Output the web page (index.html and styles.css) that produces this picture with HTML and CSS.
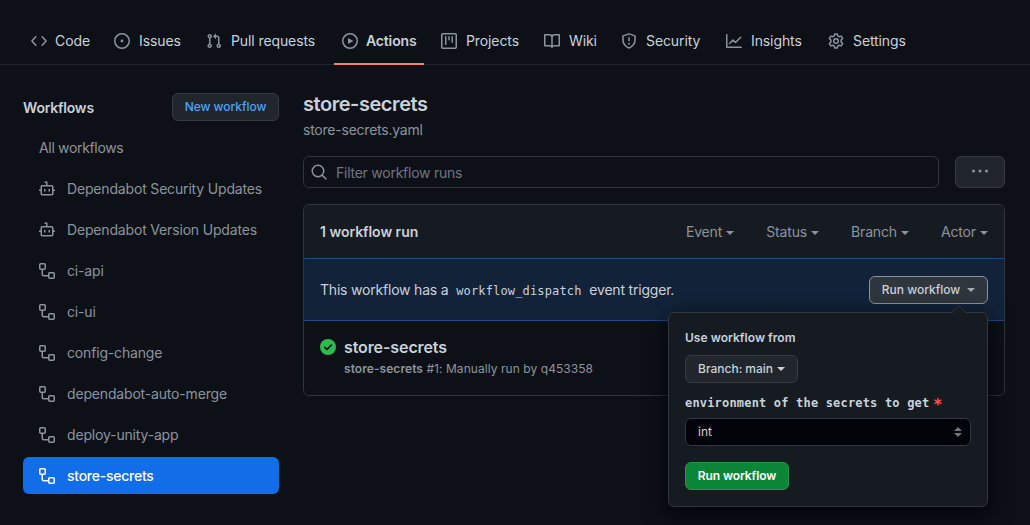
FILE: index.html
```html
<!DOCTYPE html>
<html lang="en">
<head>
<meta charset="utf-8">
<title>store-secrets · Actions</title>
<link rel="stylesheet" href="styles.css">
</head>
<body>
<svg class="defs" width="0" height="0">
  <symbol id="workflow" viewBox="0 0 16 16"><path d="M0 1.75C0 .784.784 0 1.75 0h3.5C6.216 0 7 .784 7 1.75v3.5A1.75 1.75 0 015.25 7H4v4a1 1 0 001 1h4v-1.25C9 9.784 9.784 9 10.75 9h3.5c.966 0 1.75.784 1.75 1.75v3.5A1.75 1.75 0 0114.25 16h-3.5A1.75 1.75 0 019 14.25v-.75H5A2.5 2.5 0 012.5 11V7h-.75A1.75 1.75 0 010 5.25v-3.5zm1.75-.25a.25.25 0 00-.25.25v3.5c0 .138.112.25.25.25h3.5a.25.25 0 00.25-.25v-3.5a.25.25 0 00-.25-.25h-3.5zm9 9a.25.25 0 00-.25.25v3.5c0 .138.112.25.25.25h3.5a.25.25 0 00.25-.25v-3.5a.25.25 0 00-.25-.25h-3.5z"/></symbol>
  <symbol id="bot" viewBox="0 0 16 16"><path class="line" d="M5.5 1.25h2.25V4.5M3.25 4.75h9.5c.55 0 1 .45 1 1v7c0 .55-.45 1-1 1h-9.5c-.55 0-1-.45-1-1v-7c0-.55.45-1 1-1zM0 9.25h2M14 9.25h2M5.75 8v2.5M10.25 8v2.5"/></symbol>
</svg>

<nav class="tabs">
  <a class="tab"><svg class="icon" viewBox="0 0 16 16"><path class="line" stroke-linecap="round" stroke-linejoin="round" d="M4.8 3.7.9 8l3.9 4.3M11.2 3.7 15.1 8l-3.9 4.3"/></svg><span>Code</span></a>
  <a class="tab"><svg class="icon" viewBox="0 0 16 16"><circle class="line" cx="8" cy="8" r="7.25"/><circle cx="8" cy="8" r="1.4"/></svg><span>Issues</span></a>
  <a class="tab"><svg class="icon" viewBox="0 0 16 16"><path fill-rule="evenodd" d="M7.177 3.073L9.573.677A.25.25 0 0110 .854v4.792a.25.25 0 01-.427.177L7.177 3.427a.25.25 0 010-.354zM3.75 2.5a.75.75 0 100 1.5.75.75 0 000-1.5zm-2.25.75a2.25 2.25 0 113 2.122v5.256a2.251 2.251 0 11-1.5 0V5.372A2.25 2.25 0 011.5 3.25zM11 2.5h-1V4h1a1 1 0 011 1v5.628a2.251 2.251 0 101.5 0V5A2.5 2.5 0 0011 2.5zm1 10.25a.75.75 0 111.5 0 .75.75 0 01-1.5 0zM3.75 12a.75.75 0 100 1.5.75.75 0 000-1.5z"/></svg><span>Pull requests</span></a>
  <a class="tab tab-active"><svg class="icon" viewBox="0 0 16 16"><circle class="line" cx="8" cy="8" r="7.25"/><path d="M6.4 5.2 11 7.8a.25.25 0 010 .4L6.4 10.8a.25.25 0 01-.4-.2V5.4c0-.2.2-.3.4-.2z"/></svg><span>Actions</span></a>
  <a class="tab"><svg class="icon" viewBox="0 0 16 16"><rect class="line" x=".75" y=".75" width="14.5" height="14.5" rx="1"/><path class="line" stroke-linecap="round" d="M4.75 3.8v7.5M8 3.8v3M11.25 3.8v5.5"/></svg><span>Projects</span></a>
  <a class="tab"><svg class="icon" viewBox="0 0 16 16"><path class="line" stroke-linejoin="round" d="M.75 1.75h4.5C6.8 1.75 8 2.9 8 4.3c0-1.4 1.2-2.55 2.75-2.55h4.5v11h-4.8c-1.2 0-2 .6-2.45 1.5-.45-.9-1.25-1.5-2.45-1.5H.75zM8 4.3v9.5"/></svg><span>Wiki</span></a>
  <a class="tab"><svg class="icon" viewBox="0 0 16 16"><path class="line" stroke-linejoin="round" d="M8 .9l6 1.95V7.1c0 3.6-2 6.2-6 8-4-1.8-6-4.4-6-8V2.85zM8 4.3v4"/><circle cx="8" cy="10.7" r="1"/></svg><span>Security</span></a>
  <a class="tab"><svg class="icon" viewBox="0 0 16 16"><path class="line" stroke-linecap="round" stroke-linejoin="round" d="M.75 1.75v12.5h14.5M3.5 10.5 7 7l2.5 2.5 5.2-5.2"/></svg><span>Insights</span></a>
  <a class="tab"><svg class="icon" viewBox="0 0 16 16"><path class="line" stroke-linejoin="round" d="M6.8.9h2.4l.5 2 1.4.8 2-.6 1.6 2.1-.4.6-1.2 1.3v1.8l1.2 1.3.4.6-1.6 2.1-2-.6-1.4.8-.5 2H6.8l-.5-2-1.4-.8-2 .6-1.6-2.1.4-.6 1.2-1.3V7.1L1.7 5.8l-.4-.6 1.6-2.1 2 .6 1.4-.8z"/><circle class="line" cx="8" cy="8" r="2.3"/></svg><span>Settings</span></a>
</nav>

<div class="layout">
  <aside class="sidebar">
    <div class="sidebar-head"><h2>Workflows</h2><button class="btn btn-link">New workflow</button></div>
    <a class="item">All workflows</a>
    <a class="item"><svg class="icon"><use href="#bot"/></svg>Dependabot Security Updates</a>
    <a class="item"><svg class="icon"><use href="#bot"/></svg>Dependabot Version Updates</a>
    <a class="item"><svg class="icon"><use href="#workflow"/></svg>ci-api</a>
    <a class="item"><svg class="icon"><use href="#workflow"/></svg>ci-ui</a>
    <a class="item"><svg class="icon"><use href="#workflow"/></svg>config-change</a>
    <a class="item"><svg class="icon"><use href="#workflow"/></svg>dependabot-auto-merge</a>
    <a class="item"><svg class="icon"><use href="#workflow"/></svg>deploy-unity-app</a>
    <a class="item item-active"><svg class="icon"><use href="#workflow"/></svg>store-secrets</a>
  </aside>

  <main class="main">
    <h1>store-secrets</h1>
    <p class="file">store-secrets.yaml</p>
    <div class="search-row">
      <div class="search"><svg class="icon" viewBox="0 0 16 16"><circle class="line" cx="7" cy="7" r="5.75"/><path class="line" stroke-linecap="round" d="M11.2 11.2 15 15"/></svg><span>Filter workflow runs</span></div>
      <button class="btn more"><svg width="18" height="4" viewBox="0 0 18 4"><circle cx="2.5" cy="2" r="1.5"/><circle cx="9" cy="2" r="1.5"/><circle cx="15.5" cy="2" r="1.5"/></svg></button>
    </div>

    <section class="box">
      <header class="box-head">
        <strong>1 workflow run</strong>
        <div class="filters">
          <span>Event<i class="caret"></i></span>
          <span>Status<i class="caret"></i></span>
          <span>Branch<i class="caret"></i></span>
          <span>Actor<i class="caret"></i></span>
        </div>
      </header>
      <div class="banner">
        <p>This workflow has a <code>workflow_dispatch</code> event trigger.</p>
        <div class="dispatch">
          <button class="btn btn-open">Run workflow<i class="caret"></i></button>
          <form class="popover">
            <svg class="tip" width="16" height="9" viewBox="0 0 16 9"><path d="M0 8.5 8 .7l8 7.8V9H0z"/><path class="tip-edge" d="M.5 8 8 .7 15.5 8"/></svg>
            <b class="from">Use workflow from</b>
            <button type="button" class="btn branch"><span>Branch:</span> main<i class="caret"></i></button>
            <label class="env">environment of the secrets to get<em>*</em></label>
            <div class="select"><span>int</span><svg width="8" height="10" viewBox="0 0 8 10"><path d="M4 0l4 4H0zM4 10 0 6h8z"/></svg></div>
            <button type="button" class="btn btn-primary">Run workflow</button>
          </form>
        </div>
      </div>
      <div class="run">
        <svg class="status" viewBox="0 0 16 16"><circle cx="8" cy="8" r="8"/><path d="M4.8 8.3 7 10.4l4.3-4.3"/></svg>
        <div><h3>store-secrets</h3><p><b>store-secrets</b> #1: Manually run by q453358</p></div>
      </div>
    </section>
  </main>
</div>
</body>
</html>
```
FILE: styles.css
```css
* { box-sizing: border-box; }
body {
  margin: 0;
  height: 525px;
  overflow: hidden;
  background: #0d1117;
  color: #c9d1d9;
  font: 14px/21px Inter, "Liberation Sans", sans-serif;
  letter-spacing: -0.2px;
}
h1, h2, h3, p { margin: 0; }
.defs { position: absolute; }
.icon { width: 16px; height: 16px; flex: none; fill: #8b949e; color: #8b949e; }
.line { fill: none; stroke: currentColor; stroke-width: 1.5; }

.tabs {
  display: grid;
  grid-template-columns: 83px 92px 136px 99px 103px 77px 105px 102px 95px;
  height: 65px;
  padding: 17px 0 0 23px;
  border-bottom: 1px solid #21262d;
  letter-spacing: -0.1px;
}
.tab {
  display: flex;
  align-items: center;
  gap: 9px;
  justify-self: start;
  height: 48px;
  padding: 0 8px;
  white-space: nowrap;
}
.tab span { padding-bottom: 2px; }
.tab:first-child { gap: 8px; }
.tab-active { gap: 8px; width: 90px; font-weight: 600; box-shadow: inset 0 -2px #f78166; letter-spacing: -0.15px; }

.layout { display: grid; grid-template-columns: 256px 702px; gap: 24px; padding: 28px 0 0 23px; }
.sidebar { display: flex; flex-direction: column; gap: 4px; }
.sidebar-head { display: flex; justify-content: space-between; align-items: center; height: 28px; margin-bottom: 4px; }
.sidebar h2 { font-size: 14px; font-weight: 600; }
.item {
  display: flex;
  align-items: center;
  gap: 12px;
  height: 37px;
  padding: 0 16px;
  border-radius: 6px;
  color: #8b949e;
  letter-spacing: -0.17px;
  white-space: nowrap;
}
.item:nth-child(2) { letter-spacing: -0.33px; }
.item-active, .item-active .icon { color: #fff; fill: #fff; }
.item-active { background: #116de8; font-weight: 500; letter-spacing: -0.25px; }

.btn {
  display: inline-flex;
  align-items: center;
  justify-content: center;
  height: 28px;
  padding: 0 12px;
  border: 1px solid #363b42;
  border-radius: 6px;
  background: #21262d;
  color: #c9d1d9;
  font: 500 12px/18px Inter, "Liberation Sans", sans-serif;
  letter-spacing: 0;
  white-space: nowrap;
}
.btn-link { width: 107px; color: #4fa3fb; letter-spacing: -0.05px; }
.caret {
  display: inline-block;
  margin-left: 4px;
  border: 4px solid transparent;
  border-top-color: currentColor;
  border-bottom: 0;
  vertical-align: middle;
}

.main h1 { margin-top: -1px; font-size: 20px; line-height: 24px; font-weight: 600; letter-spacing: -0.45px; }
.file { margin-top: 3px; color: #8b949e; letter-spacing: -0.23px; }
.search-row { display: flex; gap: 16px; margin-top: 16px; }
.search {
  display: flex;
  align-items: center;
  gap: 9px;
  width: 636px;
  height: 32px;
  padding: 0 7px;
  border: 1px solid #30363d;
  border-radius: 6px;
  color: #6e7681;
  letter-spacing: -0.25px;
}
.more { width: 50px; height: 32px; fill: #8b949e; padding-bottom: 2px; }

.box { margin-top: 16px; height: 192px; border: 1px solid #30363d; border-radius: 6px; }
.box-head {
  display: flex;
  align-items: center;
  justify-content: space-between;
  height: 53px;
  padding: 0 16px;
  border-radius: 6px 6px 0 0;
  background: #161b22;
}
.box-head strong { font-weight: 600; letter-spacing: -0.03px; }
.filters { display: flex; gap: 32px; color: #8b949e; letter-spacing: -0.15px; }
.banner {
  display: flex;
  justify-content: space-between;
  align-items: center;
  height: 63px;
  padding: 0 16px;
  border: 1px solid #1b4a86;
  border-width: 1px 0;
  background: #122339;
}
code { margin: 0 4px; font: 12px/18px "DejaVu Sans Mono", monospace; letter-spacing: 0.15px; }
.dispatch { position: relative; height: 28px; }
.btn-open { width: 119px; border-color: #8b949e; background: #30363d; }
.btn-open .caret { margin-left: 7px; color: #a2a9b1; }

.popover {
  position: absolute;
  top: 36px;
  right: 0;
  display: flex;
  flex-direction: column;
  align-items: flex-start;
  width: 320px;
  height: 195px;
  padding: 16px;
  border: 1px solid #30363d;
  border-radius: 6px;
  background: #161b22;
  box-shadow: 0 8px 24px #010409;
  font-size: 12px;
  line-height: 18px;
  letter-spacing: 0;
}
.tip { position: absolute; top: -8px; right: 20px; fill: #161b22; }
.tip .tip-edge { fill: none; stroke: #30363d; }
.from { font-weight: 600; letter-spacing: 0.04px; }
.branch { margin-top: 8px; width: 113px; }
.branch span { margin-right: 3px; }
.env { margin-top: 11px; font: bold 12px/18px "DejaVu Sans Mono", monospace; letter-spacing: 0.18px; }
.env em { margin-left: 4px; color: #f85149; font-size: 15px; line-height: 10px; font-style: normal; vertical-align: -3px; }
.select {
  display: flex;
  align-items: center;
  justify-content: space-between;
  width: 286px;
  height: 28px;
  margin-top: 6px;
  padding: 0 8px 0 12px;
  border: 1px solid #30363d;
  border-radius: 6px;
  background: #010409;
  fill: #6e7681;
}
.btn-primary { width: 104px; margin-top: 16px; border-color: #279446; background: #0b8537; color: #fff; font-weight: 600; letter-spacing: -0.1px; }

.run { display: flex; gap: 8px; padding: 14px 16px; }
.status { width: 16px; height: 16px; margin-top: 4px; fill: #2dba4e; }
.status path { fill: none; stroke: #0d1117; stroke-width: 1.6; stroke-linecap: round; stroke-linejoin: round; }
.run h3 { font-size: 16px; line-height: 24px; font-weight: 600; letter-spacing: -0.1px; }
.run p { margin-top: 1px; color: #8b949e; font-size: 12px; line-height: 18px; letter-spacing: 0.06px; }
.run p b { font-weight: 600; }
```
